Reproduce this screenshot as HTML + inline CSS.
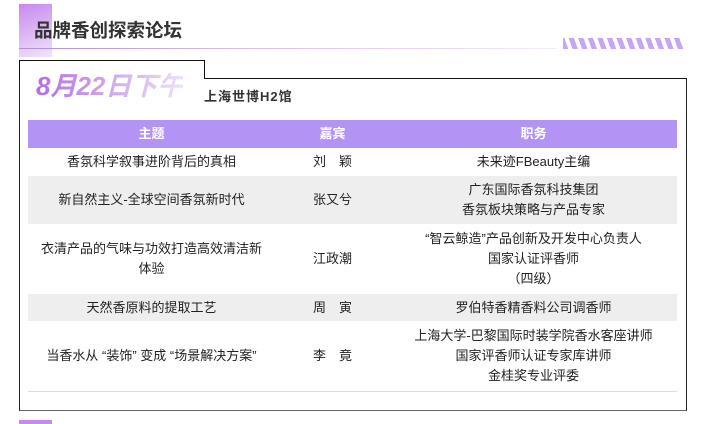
<!DOCTYPE html><html><head><meta charset="utf-8"><style>
*{margin:0;padding:0;box-sizing:border-box}
body{width:708px;height:424px;background:#fff;position:relative;overflow:hidden;font-family:"Liberation Sans","Noto Sans CJK SC",sans-serif;color:#222}
.a{position:absolute}
.row{position:absolute;left:28px;width:649px;display:flex;font-size:13px;line-height:20px;text-align:center;align-items:center}
.row div{display:flex;flex-direction:column;justify-content:center;align-items:center}
.c1{width:247px}.c2{width:115px}.c3{width:287px}
.g{background:#eeeeee}
</style></head><body>
<div class="a" style="left:19px;top:4px;width:33px;height:53px;background:linear-gradient(160deg,#c888ee,#f0e4fa)"></div>
<div class="a" style="left:34px;top:18px;font-size:18.5px;font-weight:bold;color:#333;line-height:26px">品牌香创探索论坛</div>
<div class="a" style="left:19px;top:48px;width:537px;height:1px;background:linear-gradient(90deg,#b28fd8,#d9c6ee,#f3eaf8)"></div>
<div class="a" style="left:563px;top:38px;width:120px;height:11px;background:repeating-linear-gradient(70deg,#c6a6f0 0 5px,transparent 5px 9px)"></div>
<div class="a" style="left:19px;top:78px;width:668px;height:333px;border:1px solid #222;border-bottom-color:#666;border-top:none"></div>
<div class="a" style="left:204px;top:78px;width:483px;height:1px;background:#111"></div>
<div class="a" style="left:19px;top:60px;width:186px;height:19px;border:1px solid #111;border-bottom:none;background:#fff"></div>
<div class="a" style="left:20px;top:78px;width:184px;height:2px;background:#fff"></div>
<div class="a" style="left:36px;top:70px;font-size:26px;font-weight:bold;font-style:italic;line-height:32px;background:linear-gradient(90deg,#b56ee0,#cfa8ee,#ebe0fa);-webkit-background-clip:text;color:transparent">8月22日下午</div>
<div class="a" style="left:204px;top:86px;font-size:13px;font-weight:bold;color:#333;letter-spacing:1px">上海世博H2馆</div>
<div class="row" style="top:120px;height:28px;background:#b394f5;color:#fff;font-weight:bold"><div class="c1">主题</div><div class="c2">嘉宾</div><div class="c3">职务</div></div>
<div class="row" style="top:148px;height:28px"><div class="c1">香氛科学叙事进阶背后的真相</div><div class="c2">刘　颖</div><div class="c3">未来迹FBeauty主编</div></div>
<div class="row g" style="top:176px;height:48px"><div class="c1">新自然主义-全球空间香氛新时代</div><div class="c2">张又兮</div><div class="c3"><span>广东国际香氛科技集团</span><span>香氛板块策略与产品专家</span></div></div>
<div class="row" style="top:224px;height:70px"><div class="c1" style="padding:0 6px"><span>衣清产品的气味与功效打造高效清洁新</span><span>体验</span></div><div class="c2">江政潮</div><div class="c3"><span>“智云鲸造”产品创新及开发中心负责人</span><span>国家认证评香师</span><span>（四级）</span></div></div>
<div class="row g" style="top:294px;height:27px"><div class="c1">天然香原料的提取工艺</div><div class="c2">周　寅</div><div class="c3">罗伯特香精香料公司调香师</div></div>
<div class="row" style="top:321px;height:71px;border-bottom:1px solid #ddd"><div class="c1">当香水从 “装饰” 变成 “场景解决方案”</div><div class="c2">李　竟</div><div class="c3"><span>上海大学-巴黎国际时装学院香水客座讲师</span><span>国家评香师认证专家库讲师</span><span>金桂奖专业评委</span></div></div>
<div class="a" style="left:19px;top:420px;width:33px;height:4px;background:#c888ee"></div>
</body></html>
